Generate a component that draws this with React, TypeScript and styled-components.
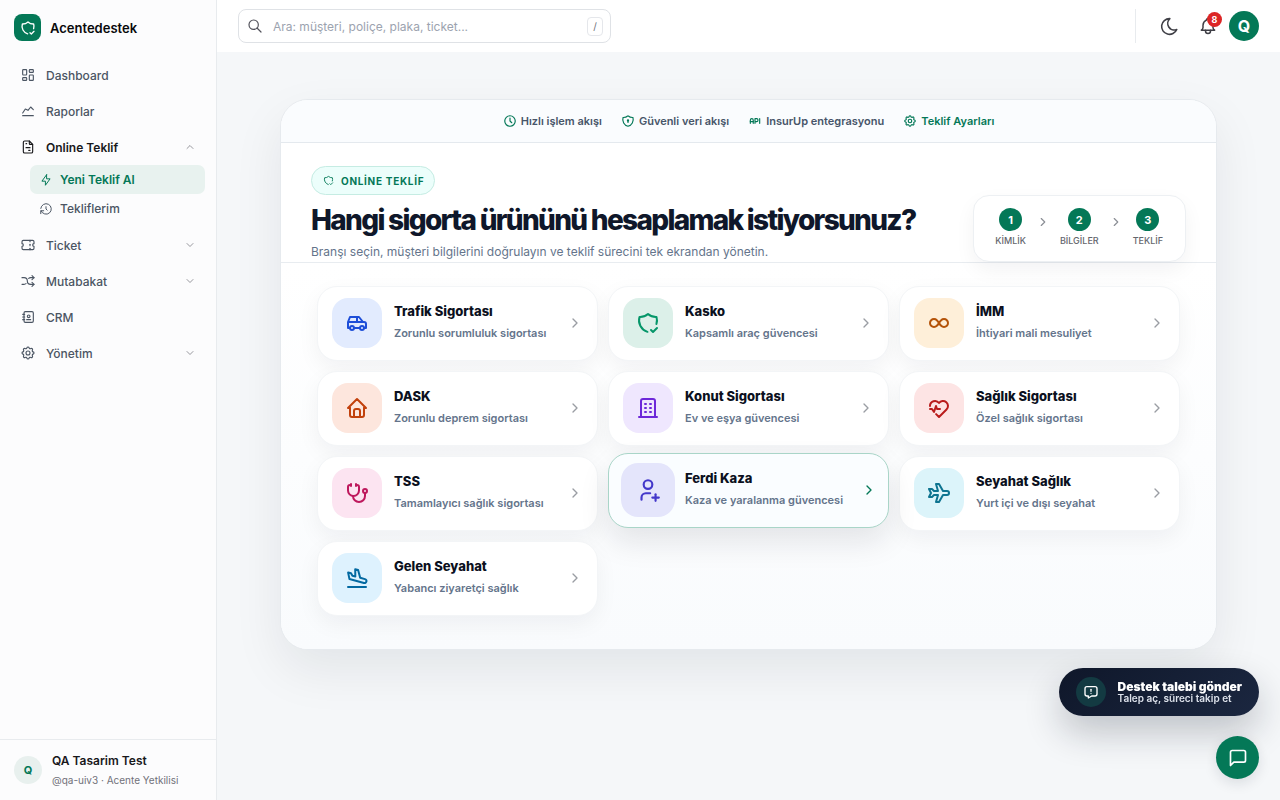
import React from "react";
import styled, { createGlobalStyle, css } from "styled-components";
import {
  TbAddressBook,
  TbApi,
  TbArrowsShuffle,
  TbBell,
  TbBolt,
  TbBuilding,
  TbCar,
  TbChartLine,
  TbChevronDown,
  TbChevronRight,
  TbChevronUp,
  TbClock,
  TbFileInvoice,
  TbHeartbeat,
  TbHistory,
  TbHome,
  TbInfinity,
  TbLayoutDashboard,
  TbMessageReport,
  TbMoon,
  TbPlane,
  TbPlaneArrival,
  TbSearch,
  TbSettings,
  TbShieldCheck,
  TbShieldLock,
  TbStethoscope,
  TbTicket,
  TbUserPlus,
} from "react-icons/tb";
import type { IconType } from "react-icons";

const green = "#047857";

const GlobalStyle = createGlobalStyle`
  *, *::before, *::after { box-sizing: border-box; }
  body {
    margin: 0;
    background: #f5f7f9;
    color: #0f172a;
    font-family: Inter, "Liberation Sans", sans-serif;
    font-size: 12px;
    -webkit-font-smoothing: antialiased;
  }
  button, input { font-family: inherit; }
  svg { display: block; flex: none; }
`;

const Shell = styled.div`
  display: grid;
  grid-template-columns: 217px minmax(0, 1fr);
  min-height: 100vh;
`;

const Sidebar = styled.aside`
  position: sticky;
  top: 0;
  height: 100vh;
  display: flex;
  flex-direction: column;
  background: #fcfcfd;
  border-right: 1px solid #e8ebee;
`;

const Brand = styled.a`
  display: flex;
  align-items: center;
  gap: 9px;
  padding: 14px 14px 16px;
  color: #09090b;
  font-size: 13px;
  font-weight: 600;
  text-decoration: none;
`;

const BrandMark = styled.span`
  display: grid;
  place-items: center;
  width: 27px;
  height: 27px;
  border-radius: 8px;
  background: ${green};
  color: #fff;
`;

const Nav = styled.nav`
  flex: 1;
  padding: 0 11px;
`;

const NavItem = styled.a<{ $open?: boolean }>`
  display: flex;
  align-items: center;
  gap: 10px;
  height: 36px;
  padding: 0 9px;
  color: ${(p) => (p.$open ? "#18181b" : "#4b5563")};
  font-size: 12px;
  font-weight: ${(p) => (p.$open ? 600 : 500)};
  text-decoration: none;
  & > svg { stroke-width: 1.7; }
`;

const NavLabel = styled.span`
  flex: 1;
`;

const SubNav = styled.div`
  padding: 0 0 4px 19px;
`;

const SubItem = styled.a<{ $active?: boolean }>`
  display: flex;
  align-items: center;
  gap: 7px;
  height: 29px;
  padding: 0 9px;
  border-radius: 7px;
  background: ${(p) => (p.$active ? "#e8f2ef" : "transparent")};
  color: ${(p) => (p.$active ? green : "#4b5563")};
  font-size: 12px;
  font-weight: ${(p) => (p.$active ? 600 : 500)};
  text-decoration: none;
  & > svg { stroke-width: 1.7; }
`;

const Account = styled.div`
  display: flex;
  align-items: center;
  gap: 10px;
  height: 61px;
  padding: 0 14px;
  border-top: 1px solid #e8ebee;
`;

const Avatar = styled.span`
  display: grid;
  place-items: center;
  width: 28px;
  height: 28px;
  border-radius: 50%;
  background: #e8f0ee;
  color: ${green};
  font-size: 11px;
  font-weight: 700;
`;

const AccountName = styled.div`
  color: #18181b;
  font-size: 12px;
  line-height: 20px;
  font-weight: 600;
`;

const AccountMeta = styled.div`
  color: #71717a;
  font-size: 10px;
  line-height: 18px;
`;

const Topbar = styled.header`
  display: flex;
  align-items: center;
  justify-content: space-between;
  height: 52px;
  padding: 0 21px;
  background: #fff;
`;

const SearchBox = styled.label`
  display: flex;
  align-items: center;
  gap: 10px;
  width: 373px;
  height: 34px;
  padding: 0 7px 0 8px;
  border: 1px solid #dfe2e6;
  border-radius: 8px;
  background: #fff;
  color: #52525b;
`;

const SearchInput = styled.input`
  flex: 1;
  min-width: 0;
  padding: 0;
  border: 0;
  outline: 0;
  background: transparent;
  font-size: 12px;
  color: #18181b;
  &::placeholder { color: #9ca3af; opacity: 1; }
`;

const Key = styled.kbd`
  display: grid;
  place-items: center;
  width: 16px;
  height: 19px;
  border: 1px solid #e5e7eb;
  border-radius: 4px;
  color: #71717a;
  font-family: inherit;
  font-size: 10px;
`;

const Tools = styled.div`
  display: flex;
  align-items: center;
  height: 34px;
  padding-left: 18px;
  border-left: 1px solid #e8ebee;
`;

const IconButton = styled.button`
  position: relative;
  display: grid;
  place-items: center;
  width: 30px;
  height: 30px;
  margin-right: 9px;
  padding: 0;
  border: 0;
  background: none;
  color: #3f3f46;
  & + & { margin-right: 6px; }
`;

const Badge = styled.span`
  position: absolute;
  top: 1px;
  right: 1px;
  width: 15px;
  height: 15px;
  border-radius: 50%;
  background: #dc2626;
  color: #fff;
  font-size: 9px;
  line-height: 15px;
  font-weight: 700;
  text-align: center;
`;

const ProfileButton = styled.button`
  width: 30px;
  height: 30px;
  padding: 0;
  border: 0;
  border-radius: 50%;
  background: ${green};
  color: #fff;
  font-size: 16px;
  font-weight: 700;
`;

const Main = styled.main`
  padding: 47px 63px;
`;

const Panel = styled.section`
  max-width: 1100px;
  margin: 0 auto;
  border: 1px solid #e6eaee;
  border-radius: 28px;
  background: #fff;
  box-shadow: 0 20px 50px rgba(15, 23, 42, 0.08);
`;

const Highlights = styled.div`
  display: flex;
  align-items: center;
  justify-content: center;
  gap: 19px;
  height: 43px;
  border-bottom: 1px solid #e4e9ee;
  border-radius: 27px 27px 0 0;
  background: #fafcfe;
`;

const highlight = css`
  display: flex;
  align-items: center;
  gap: 4px;
  font-size: 11px;
  font-weight: 600;
  svg { color: ${green}; }
`;

const Highlight = styled.span`
  ${highlight}
  color: #475569;
`;

const HighlightLink = styled.a`
  ${highlight}
  color: ${green};
  text-decoration: none;
`;

const Hero = styled.div`
  display: flex;
  align-items: flex-end;
  justify-content: space-between;
  padding: 23px 30px 0;
  border-bottom: 1px solid #e8ecf0;
`;

const Eyebrow = styled.span`
  display: flex;
  align-items: center;
  gap: 7px;
  width: fit-content;
  height: 29px;
  padding: 0 10px 0 11px;
  border: 1px solid #c5ece3;
  border-radius: 15px;
  background: #ecfefb;
  color: ${green};
  font-size: 10px;
  font-weight: 700;
  letter-spacing: 0.07em;
`;

const Title = styled.h1`
  margin: 7px 0 4px;
  color: #0f172a;
  font-size: 28px;
  line-height: 36px;
  font-weight: 800;
  letter-spacing: -0.06em;
`;

const Lead = styled.p`
  margin: 0;
  color: #64748b;
  font-size: 12px;
  line-height: 20px;
`;

const Steps = styled.ol`
  display: flex;
  align-items: flex-start;
  gap: 10px;
  height: 67px;
  margin: 0;
  padding: 12px 22px 0 21px;
  list-style: none;
  border: 1px solid #edf0f3;
  border-radius: 16px;
  background: #fff;
  box-shadow: 0 8px 20px rgba(15, 23, 42, 0.05);
`;

const Step = styled.li`
  display: flex;
  flex-direction: column;
  align-items: center;
  gap: 4px;
  color: #64666d;
  font-size: 9px;
  line-height: 12px;
  font-weight: 500;
`;

const StepNumber = styled.span`
  display: grid;
  place-items: center;
  width: 23px;
  height: 23px;
  border-radius: 50%;
  background: ${green};
  color: #fff;
  font-size: 11px;
  font-weight: 700;
`;

const StepArrow = styled.li`
  padding-top: 7px;
  color: #8b8f96;
`;

const ProductGrid = styled.div`
  display: grid;
  grid-template-columns: repeat(3, minmax(0, 1fr));
  gap: 10px;
  padding: 23px 36px 33px;
  border-radius: 0 0 27px 27px;
  background: linear-gradient(180deg, #fff 0%, #f9fbfd 100%);
`;

const IconTile = styled.span<{ $ink: string; $tint: string; $large?: boolean }>`
  display: grid;
  place-items: center;
  width: 50px;
  height: 50px;
  border-radius: 16px;
  background: ${(p) => p.$tint};
  color: ${(p) => p.$ink};
  transform: ${(p) => (p.$large ? "scale(1.08)" : "none")};
`;

const ProductCard = styled.button<{ $hovered?: boolean }>`
  display: flex;
  align-items: center;
  gap: 12px;
  height: 75px;
  padding: 0 14px 1px;
  border: 1px solid ${(p) => (p.$hovered ? "#a9d5c8" : "#f3f5f7")};
  border-radius: 20px;
  background: ${(p) => (p.$hovered ? "#fafdff" : "#fff")};
  box-shadow: ${(p) =>
    p.$hovered ? "0 14px 30px rgba(15, 23, 42, 0.10)" : "0 8px 22px rgba(15, 23, 42, 0.05)"};
  color: ${(p) => (p.$hovered ? green : "#9a9da3")};
  text-align: left;
  transform: ${(p) => (p.$hovered ? "translateY(-3px)" : "none")};
  & > svg { transform: ${(p) => (p.$hovered ? "translateX(3px)" : "none")}; }
`;

const ProductText = styled.span`
  flex: 1;
  display: flex;
  flex-direction: column;
  gap: 4px;
  padding-bottom: 2px;
`;

const ProductName = styled.span`
  color: #0b1020;
  font-size: 13px;
  line-height: 18px;
  font-weight: 800;
`;

const ProductNote = styled.span`
  color: #64748b;
  font-size: 11px;
  line-height: 18px;
  font-weight: 600;
`;

const Floating = styled.div`
  position: fixed;
  right: 21px;
  bottom: 21px;
  display: flex;
  flex-direction: column;
  align-items: flex-end;
  gap: 20px;
`;

const SupportButton = styled.button`
  display: flex;
  align-items: center;
  gap: 12px;
  height: 48px;
  padding: 0 17px;
  border: 0;
  border-radius: 24px;
  background: linear-gradient(135deg, #0f172a, #1b2740);
  box-shadow: 0 16px 36px rgba(15, 23, 42, 0.24);
  color: #fff;
  text-align: left;
`;

const SupportIcon = styled.span`
  display: grid;
  place-items: center;
  width: 30px;
  height: 30px;
  border-radius: 50%;
  background: #133a42;
`;

const SupportTitle = styled.span`
  display: block;
  font-size: 12px;
  line-height: 12px;
  font-weight: 900;
`;

const SupportNote = styled.span`
  display: block;
  color: #dce1ea;
  font-size: 10px;
  line-height: 10px;
  font-weight: 600;
`;

const ChatButton = styled.button`
  display: grid;
  place-items: center;
  width: 43px;
  height: 43px;
  padding: 0;
  border: 0;
  border-radius: 50%;
  background: ${green};
  box-shadow: 0 4px 14px rgba(15, 23, 42, 0.12);
  color: #fff;
`;

type Product = { name: string; note: string; icon: IconType; ink: string; tint: string; hovered?: boolean };

const products: Product[] = [
  { name: "Trafik Sigortası", note: "Zorunlu sorumluluk sigortası", icon: TbCar, ink: "#1d4ed8", tint: "#e2ebfe" },
  { name: "Kasko", note: "Kapsamlı araç güvencesi", icon: TbShieldCheck, ink: "#059669", tint: "#dcf0e9" },
  { name: "İMM", note: "İhtiyari mali mesuliyet", icon: TbInfinity, ink: "#b45309", tint: "#feefd9" },
  { name: "DASK", note: "Zorunlu deprem sigortası", icon: TbHome, ink: "#c2410c", tint: "#fde6dd" },
  { name: "Konut Sigortası", note: "Ev ve eşya güvencesi", icon: TbBuilding, ink: "#6d28d9", tint: "#efe7fe" },
  { name: "Sağlık Sigortası", note: "Özel sağlık sigortası", icon: TbHeartbeat, ink: "#b91c1c", tint: "#fde4e4" },
  { name: "TSS", note: "Tamamlayıcı sağlık sigortası", icon: TbStethoscope, ink: "#be185d", tint: "#fce4f1" },
  { name: "Ferdi Kaza", note: "Kaza ve yaralanma güvencesi", icon: TbUserPlus, ink: "#4338ca", tint: "#e4e5fb", hovered: true },
  { name: "Seyahat Sağlık", note: "Yurt içi ve dışı seyahat", icon: TbPlane, ink: "#0e7490", tint: "#dcf4fa" },
  { name: "Gelen Seyahat", note: "Yabancı ziyaretçi sağlık", icon: TbPlaneArrival, ink: "#0369a1", tint: "#def2fe" },
];

const steps = ["KİMLİK", "BİLGİLER", "TEKLİF"];

export default function App() {
  return (
    <>
      <GlobalStyle />
      <Shell>
        <Sidebar>
          <Brand href="#">
            <BrandMark><TbShieldCheck size={16} /></BrandMark>
            Acentedestek
          </Brand>
          <Nav>
            <NavItem href="#"><TbLayoutDashboard size={16} /><NavLabel>Dashboard</NavLabel></NavItem>
            <NavItem href="#"><TbChartLine size={16} /><NavLabel>Raporlar</NavLabel></NavItem>
            <NavItem href="#" $open>
              <TbFileInvoice size={16} /><NavLabel>Online Teklif</NavLabel><TbChevronUp size={12} color="#85858d" />
            </NavItem>
            <SubNav>
              <SubItem href="#" $active><TbBolt size={14} />Yeni Teklif Al</SubItem>
              <SubItem href="#"><TbHistory size={14} />Tekliflerim</SubItem>
            </SubNav>
            <NavItem href="#"><TbTicket size={16} /><NavLabel>Ticket</NavLabel><TbChevronDown size={12} color="#85858d" /></NavItem>
            <NavItem href="#"><TbArrowsShuffle size={16} /><NavLabel>Mutabakat</NavLabel><TbChevronDown size={12} color="#85858d" /></NavItem>
            <NavItem href="#"><TbAddressBook size={16} /><NavLabel>CRM</NavLabel></NavItem>
            <NavItem href="#"><TbSettings size={16} /><NavLabel>Yönetim</NavLabel><TbChevronDown size={12} color="#85858d" /></NavItem>
          </Nav>
          <Account>
            <Avatar>Q</Avatar>
            <div>
              <AccountName>QA Tasarim Test</AccountName>
              <AccountMeta>@qa-uiv3 · Acente Yetkilisi</AccountMeta>
            </div>
          </Account>
        </Sidebar>
        <div>
          <Topbar>
            <SearchBox>
              <TbSearch size={16} strokeWidth={1.8} />
              <SearchInput type="search" aria-label="Ara" placeholder="Ara: müşteri, poliçe, plaka, ticket..." />
              <Key>/</Key>
            </SearchBox>
            <Tools>
              <IconButton aria-label="Tema"><TbMoon size={21} strokeWidth={1.8} /></IconButton>
              <IconButton aria-label="Bildirimler"><TbBell size={20} strokeWidth={1.8} /><Badge>8</Badge></IconButton>
              <ProfileButton>Q</ProfileButton>
            </Tools>
          </Topbar>
          <Main>
            <Panel>
              <Highlights>
                <Highlight><TbClock size={14} />Hızlı işlem akışı</Highlight>
                <Highlight><TbShieldLock size={14} />Güvenli veri akışı</Highlight>
                <Highlight><TbApi size={14} />InsurUp entegrasyonu</Highlight>
                <HighlightLink href="#"><TbSettings size={14} />Teklif Ayarları</HighlightLink>
              </Highlights>
              <Hero>
                <div>
                  <Eyebrow><TbShieldCheck size={11} />ONLİNE TEKLİF</Eyebrow>
                  <Title>Hangi sigorta ürününü hesaplamak istiyorsunuz?</Title>
                  <Lead>Branşı seçin, müşteri bilgilerini doğrulayın ve teklif sürecini tek ekrandan yönetin.</Lead>
                </div>
                <Steps>
                  {steps.map((label, i) => (
                    <React.Fragment key={label}>
                      {i > 0 && <StepArrow aria-hidden><TbChevronRight size={14} /></StepArrow>}
                      <Step><StepNumber>{i + 1}</StepNumber>{label}</Step>
                    </React.Fragment>
                  ))}
                </Steps>
              </Hero>
              <ProductGrid>
                {products.map(({ name, note, icon: Icon, ink, tint, hovered }) => (
                  <ProductCard key={name} $hovered={hovered}>
                    <IconTile $ink={ink} $tint={tint} $large={hovered}><Icon size={24} /></IconTile>
                    <ProductText>
                      <ProductName>{name}</ProductName>
                      <ProductNote>{note}</ProductNote>
                    </ProductText>
                    <TbChevronRight size={16} />
                  </ProductCard>
                ))}
              </ProductGrid>
            </Panel>
          </Main>
        </div>
      </Shell>
      <Floating>
        <SupportButton>
          <SupportIcon><TbMessageReport size={16} /></SupportIcon>
          <span>
            <SupportTitle>Destek talebi gönder</SupportTitle>
            <SupportNote>Talep aç, süreci takip et</SupportNote>
          </span>
        </SupportButton>
        <ChatButton aria-label="Sohbet">
          <svg width="20" height="20" viewBox="0 0 24 24" fill="none" stroke="currentColor" strokeWidth="2" strokeLinecap="round" strokeLinejoin="round">
            <path d="M21 15a2 2 0 0 1-2 2H7l-4 4V5a2 2 0 0 1 2-2h14a2 2 0 0 1 2 2z" />
          </svg>
        </ChatButton>
      </Floating>
    </>
  );
}
